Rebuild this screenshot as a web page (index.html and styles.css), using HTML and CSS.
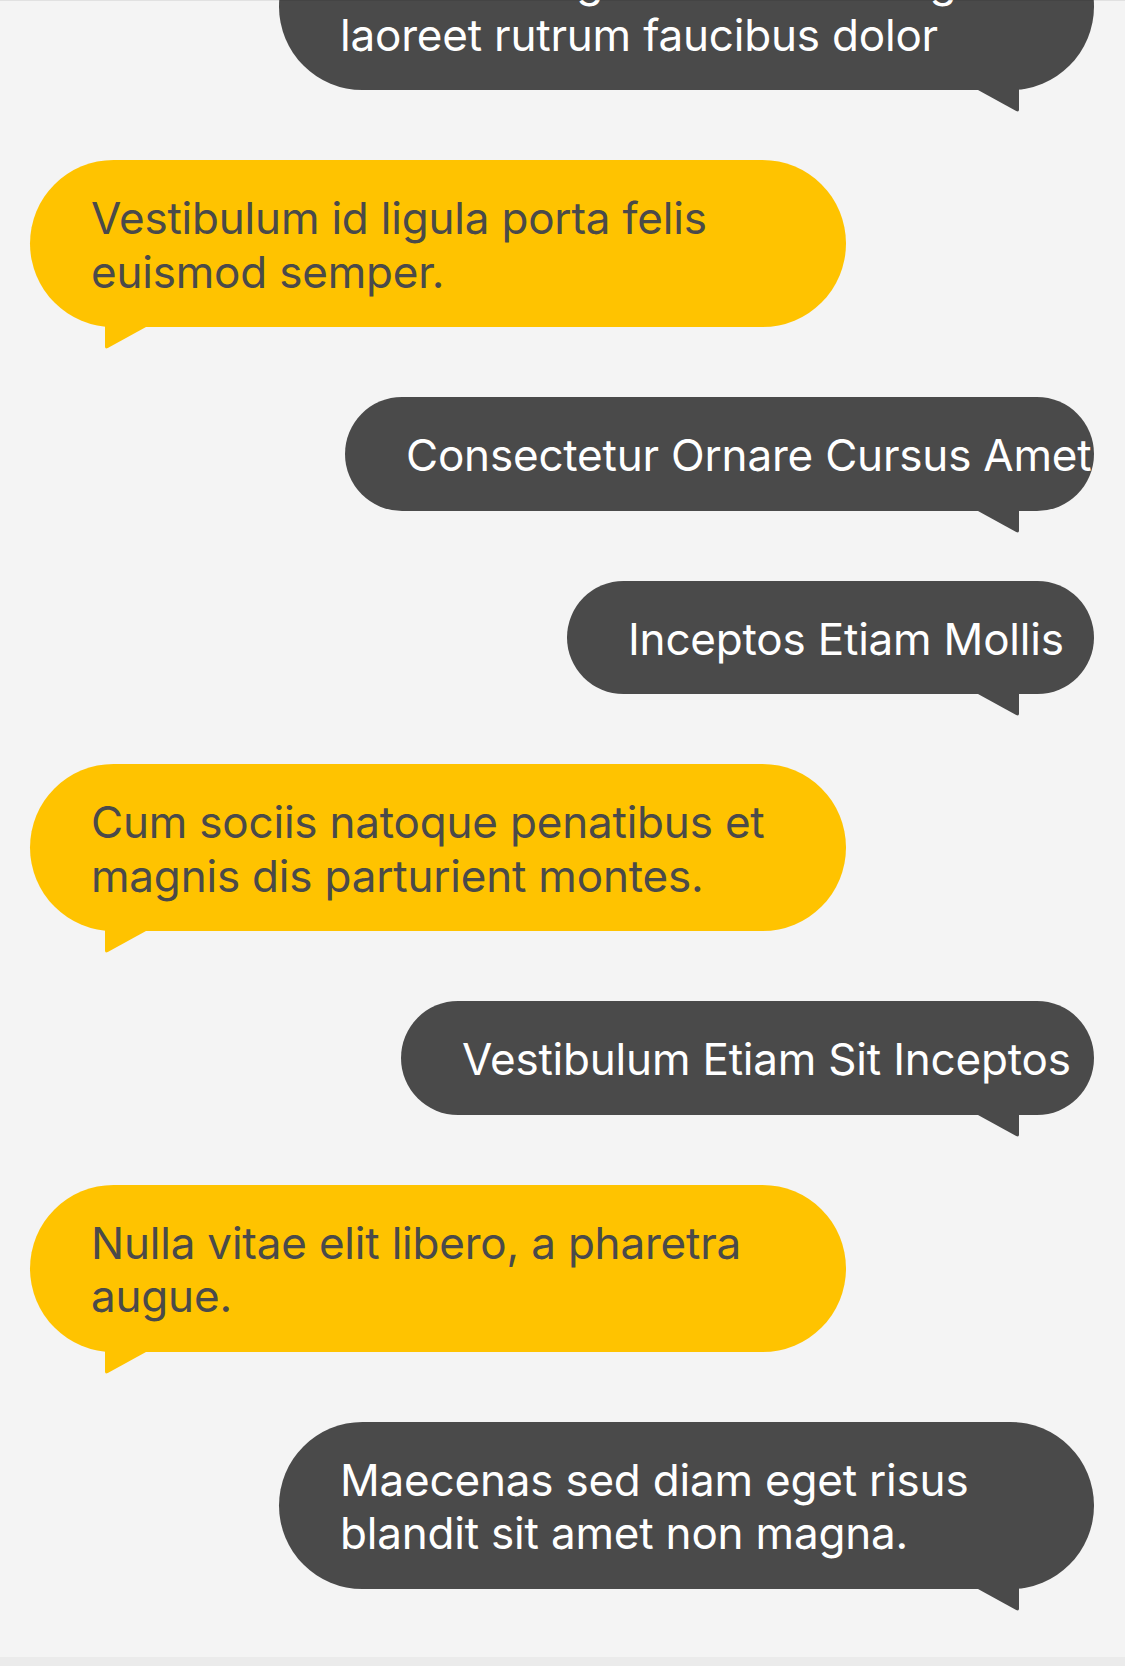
FILE: index.html
```html
<!DOCTYPE html>
<html lang="en">
<head>
<meta charset="utf-8">
<title>Chat</title>
<link rel="stylesheet" href="styles.css">
</head>
<body>
<div class="screen">
  <main class="viewport">
    <ul class="thread">
      <li class="msg msg--out msg--w815">
        <p class="msg__text">Vivamus sagittis lacus vel augue laoreet rutrum faucibus dolor</p>
        <svg class="tail" viewBox="0 0 41 24" width="41" height="24" aria-hidden="true"><path d="M0 0 H41 V20.5 Q41 23.6 38.2 22.1 L0 1 Z"/></svg>
      </li>
      <li class="msg msg--in msg--w816">
        <p class="msg__text">Vestibulum id ligula porta felis euismod semper.</p>
        <svg class="tail" viewBox="0 0 41 24" width="41" height="24" aria-hidden="true"><path d="M0 0 H41 V20.5 Q41 23.6 38.2 22.1 L0 1 Z"/></svg>
      </li>
      <li class="msg msg--out msg--w749 msg--single">
        <p class="msg__text">Consectetur Ornare Cursus Amet</p>
        <svg class="tail" viewBox="0 0 41 24" width="41" height="24" aria-hidden="true"><path d="M0 0 H41 V20.5 Q41 23.6 38.2 22.1 L0 1 Z"/></svg>
      </li>
      <li class="msg msg--out msg--w527 msg--single">
        <p class="msg__text">Inceptos Etiam Mollis</p>
        <svg class="tail" viewBox="0 0 41 24" width="41" height="24" aria-hidden="true"><path d="M0 0 H41 V20.5 Q41 23.6 38.2 22.1 L0 1 Z"/></svg>
      </li>
      <li class="msg msg--in msg--w816">
        <p class="msg__text">Cum sociis natoque penatibus et magnis dis parturient montes.</p>
        <svg class="tail" viewBox="0 0 41 24" width="41" height="24" aria-hidden="true"><path d="M0 0 H41 V20.5 Q41 23.6 38.2 22.1 L0 1 Z"/></svg>
      </li>
      <li class="msg msg--out msg--w693 msg--single">
        <p class="msg__text">Vestibulum Etiam Sit Inceptos</p>
        <svg class="tail" viewBox="0 0 41 24" width="41" height="24" aria-hidden="true"><path d="M0 0 H41 V20.5 Q41 23.6 38.2 22.1 L0 1 Z"/></svg>
      </li>
      <li class="msg msg--in msg--w816">
        <p class="msg__text">Nulla vitae elit libero, a pharetra augue.</p>
        <svg class="tail" viewBox="0 0 41 24" width="41" height="24" aria-hidden="true"><path d="M0 0 H41 V20.5 Q41 23.6 38.2 22.1 L0 1 Z"/></svg>
      </li>
      <li class="msg msg--out msg--w815">
        <p class="msg__text">Maecenas sed diam eget risus blandit sit amet non magna.</p>
        <svg class="tail" viewBox="0 0 41 24" width="41" height="24" aria-hidden="true"><path d="M0 0 H41 V20.5 Q41 23.6 38.2 22.1 L0 1 Z"/></svg>
      </li>
    </ul>
  </main>
  <footer class="composer"></footer>
</div>
</body>
</html>
```

FILE: styles.css
```css
* {
  box-sizing: border-box;
}

html,
body {
  margin: 0;
  padding: 0;
}

body {
  background: #f4f4f4;
  font-family: Inter, "Noto Sans", "Liberation Sans", sans-serif;
}

.screen {
  width: 1125px;
  height: 1666px;
  display: flex;
  flex-direction: column;
  overflow: hidden;
}

.viewport {
  position: relative;
  flex: 1 1 auto;
  overflow: hidden;
}

.viewport::before {
  content: "";
  position: absolute;
  top: 0;
  left: 0;
  right: 0;
  height: 1px;
  background: rgba(0, 0, 0, 0.075);
  z-index: 2;
}

.composer {
  flex: 0 0 9px;
  background: #ebebeb;
}

.thread {
  list-style: none;
  margin: -77px 0 0 0;
  padding: 0 31px 0 30px;
  display: flex;
  flex-direction: column;
  gap: 70px;
}

.msg {
  position: relative;
  border-radius: 9999px;
  padding: 32px 40px 28px 61px;
}

.msg__text {
  margin: 0;
  font-size: 44px;
  line-height: 53.5px;
  font-weight: 400;
  letter-spacing: -0.2px;
}

.msg--single .msg__text {
  white-space: nowrap;
}

.msg--in {
  align-self: flex-start;
  background: #ffc300;
  color: #4a4a4a;
}

.msg--out {
  align-self: flex-end;
  background: #4a4a4a;
  color: #ffffff;
}

.msg--w816 { width: 816px; }
.msg--w815 { width: 815px; }
.msg--w749 { width: 749px; }
.msg--w693 { width: 693px; }
.msg--w527 { width: 527px; }

.tail {
  position: absolute;
  top: calc(100% - 1px);
  display: block;
}

.msg--out .tail {
  right: 75px;
  fill: #4a4a4a;
}

.msg--in .tail {
  left: 75px;
  fill: #ffc300;
  transform: scaleX(-1);
}
```
